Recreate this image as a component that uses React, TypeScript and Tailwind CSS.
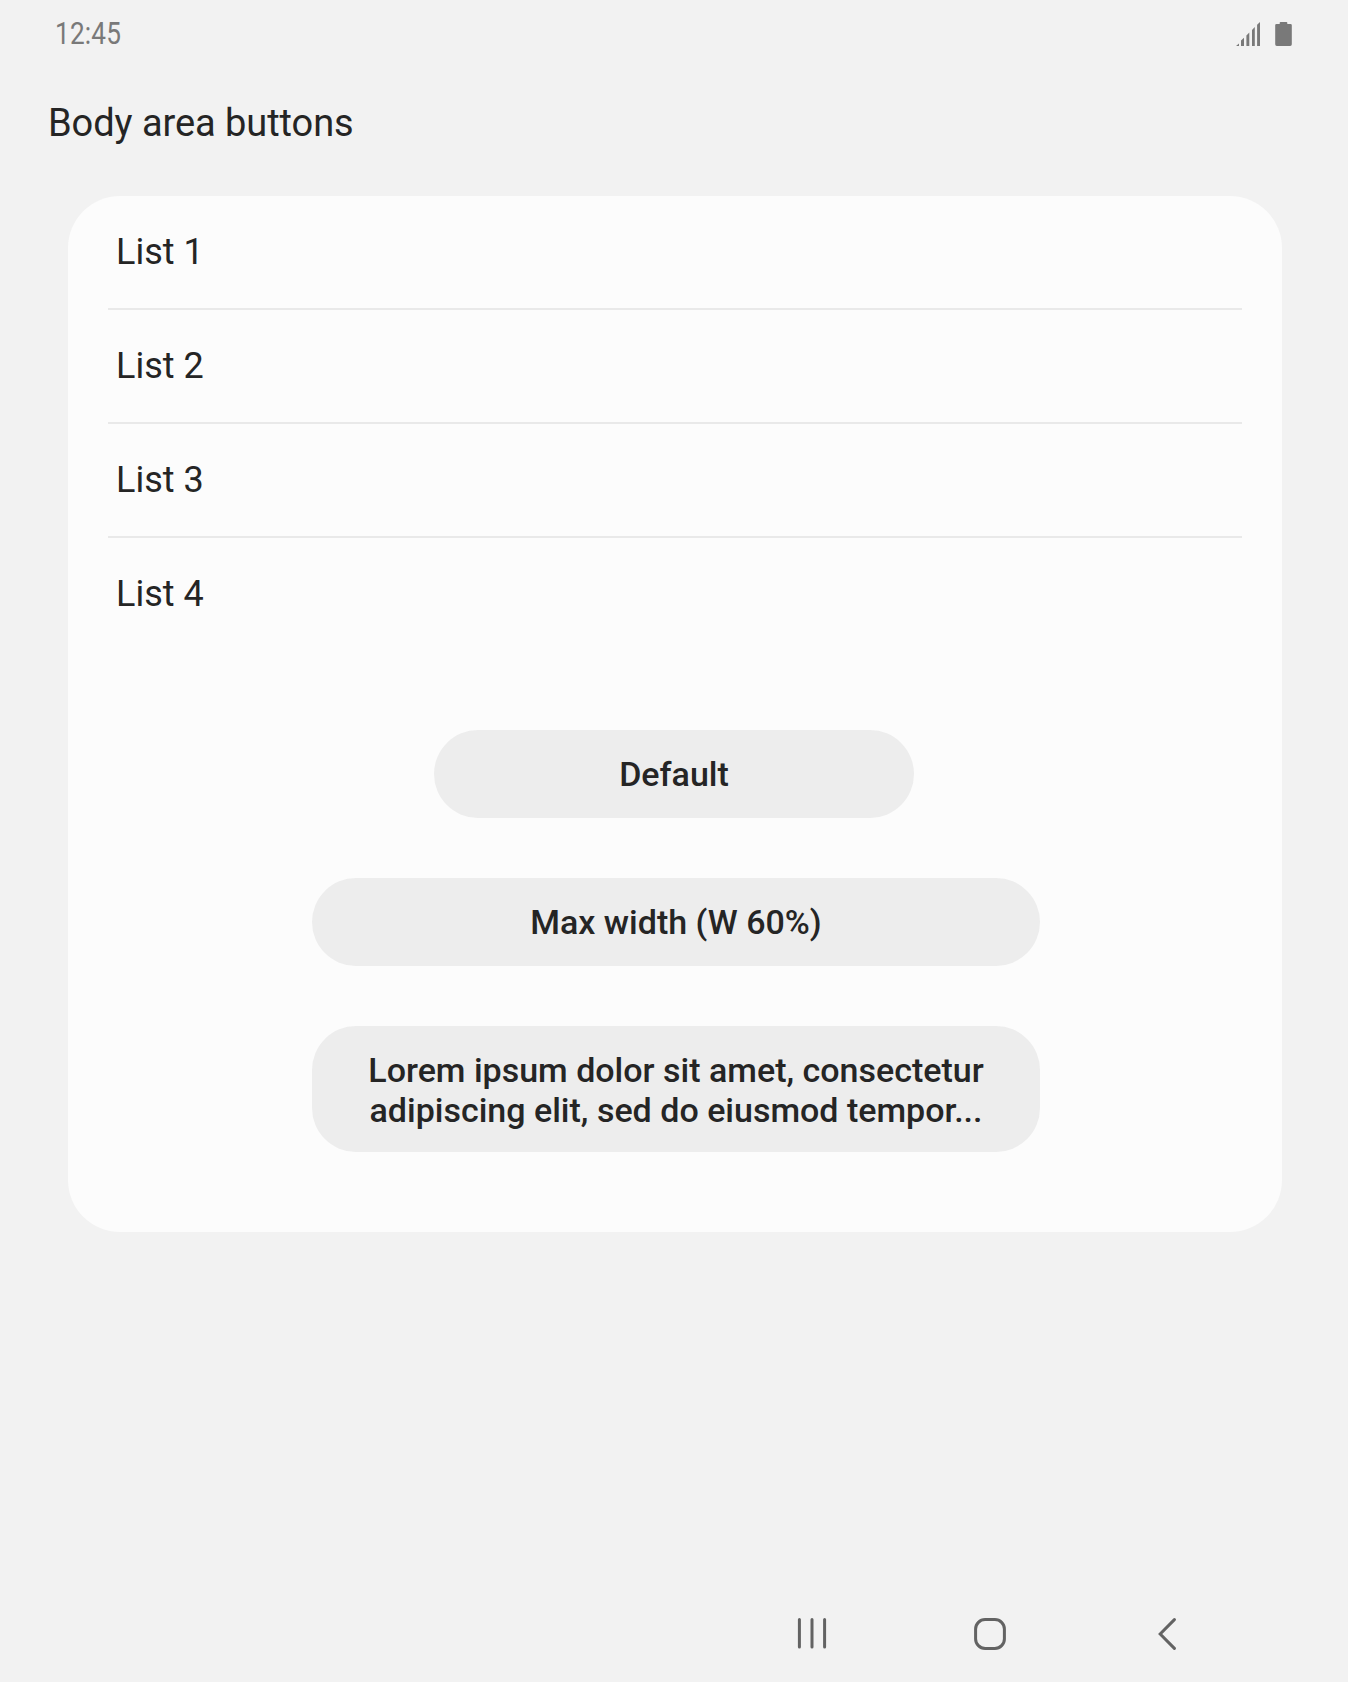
import React from "react";

const items = ["List 1", "List 2", "List 3", "List 4"];

function SignalIcon() {
  return (
    <svg width="24" height="24" viewBox="0 0 24 24" fill="#797979">
      <path d="M0 24L3 21.4V24ZM5 24V18.6L8 15.8V24ZM10.4 24V13.4L13.3 10.6V24ZM16 24V8L18.8 5V24ZM21.1 24V2.7L24 0V24Z" />
    </svg>
  );
}

function BatteryIcon() {
  return (
    <svg width="17" height="24" viewBox="0 0 17 24" fill="#797979">
      <path d="M5.5 0H11.5Q12.3 0 12.3 .8V2H15.5Q16.8 2 16.8 3.3V22.3Q16.8 24 15.2 24H1.8Q.2 24 .2 22.3V3.3Q.2 2 1.5 2H4.7V.8Q4.7 0 5.5 0Z" />
    </svg>
  );
}

function PillButton({ className, children }: { className: string; children: React.ReactNode }) {
  return (
    <button
      className={`flex items-center justify-center rounded-[44px] bg-[#ededed] text-center text-[34px] leading-[40px] font-medium ${className}`}
    >
      {children}
    </button>
  );
}

export default function App() {
  return (
    <div className="flex h-[1682px] w-[1348px] flex-col bg-[#f2f2f2] font-[Roboto,sans-serif] text-[#252525]">
      <header className="flex h-[68px] items-center justify-between pr-14 pl-[55px]">
        <span className="origin-left scale-x-[0.845] text-[31px] leading-[68px] tracking-[0.2px] text-[#797979]">12:45</span>
        <div className="flex items-center gap-[15px]">
          <SignalIcon />
          <BatteryIcon />
        </div>
      </header>
      <h1 className="mt-8 pl-12 text-[38px] leading-[46px] tracking-[-0.06px]">Body area buttons</h1>
      <main className="mt-[50px] ml-[68px] flex h-[1036px] w-[1214px] flex-col rounded-[52px] bg-[#fcfcfc]">
        <ul className="mx-10">
          {items.map((item) => (
            <li
              key={item}
              className="flex h-[114px] items-center border-b-2 border-[#e9e9e9] pl-2 text-[36px] last:border-transparent"
            >
              {item}
            </li>
          ))}
        </ul>
        <div className="mt-[78px] flex flex-col items-center gap-[60px]">
          <PillButton className="mr-[2px] h-[88px] w-[480px]">Default</PillButton>
          <PillButton className="ml-[2px] h-[88px] w-[728px]">Max width (W 60%)</PillButton>
          <PillButton className="ml-[2px] h-[126px] w-[728px] pt-[2px]">
            <span>
              Lorem ipsum dolor sit amet, consectetur
              <br />
              adipiscing elit, sed do eiusmod tempor...
            </span>
          </PillButton>
        </div>
      </main>
      <nav className="mt-auto mr-[172px] mb-8 flex h-8 items-start justify-end">
        <svg width="32" height="32" viewBox="0 0 32 32" fill="none" stroke="#636363" strokeWidth="3" strokeLinecap="round">
          <path d="M3.4 1.6V29M16 1.6V29M28.6 1.6V29" />
        </svg>
        <svg className="ml-[146px]" width="32" height="32" viewBox="0 0 32 32" fill="none" stroke="#636363" strokeWidth="3">
          <rect x="1.6" y="1.6" width="28.8" height="28.8" rx="9.5" />
        </svg>
        <svg className="ml-[152px]" width="18" height="32" viewBox="0 0 18 32" fill="none" stroke="#636363" strokeWidth="3" strokeLinecap="round">
          <path d="M16.4 1.6L2.2 16L16.4 30.4" />
        </svg>
      </nav>
    </div>
  );
}
